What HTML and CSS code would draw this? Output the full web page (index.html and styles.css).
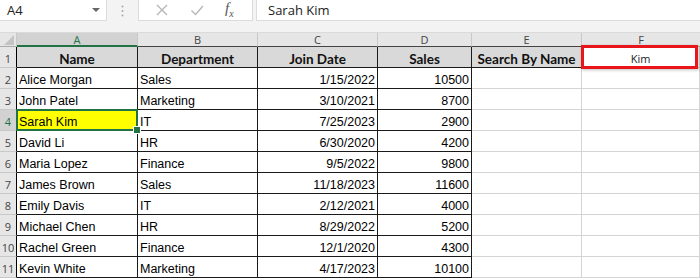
FILE: index.html
```html
<!DOCTYPE html>
<html lang="en">
<head>
    <meta charset="UTF-8">
    <title>Search By Name</title>
    <link rel="stylesheet" href="styles.css">
</head>
<body>
    <div class="barra">
        <div class="nome">
            <span>A4</span>
            <svg width="8" height="5" viewBox="0 0 8 5"><path d="M0 0h8L4 4z" fill="#666"/></svg>
        </div>
        <div class="pontos">
            <svg width="3" height="12" viewBox="0 0 3 12"><circle cx="1.5" cy="1.5" r="1" fill="#aaa"/><circle cx="1.5" cy="6" r="1" fill="#aaa"/><circle cx="1.5" cy="10.5" r="1" fill="#aaa"/></svg>
        </div>
        <div class="botoes">
            <svg width="14" height="14" viewBox="0 0 14 14"><path d="M2 2l10 10M12 2L2 12" stroke="#b5b5b5" stroke-width="1.3" fill="none"/></svg>
            <svg width="14" height="14" viewBox="0 0 14 14"><path d="M1.5 7.5l4 4L13 3" stroke="#b5b5b5" stroke-width="1.3" fill="none"/></svg>
            <span class="fx"><i>f</i><sub>x</sub></span>
        </div>
        <div class="formula">Sarah Kim</div>
    </div>

    <div class="planilha">
        <div class="canto"><svg width="10" height="10" viewBox="0 0 10 10"><path d="M10 0V10H0z" fill="#c4c4c4"/></svg></div>
        <div class="col ativa">A</div>
        <div class="col">B</div>
        <div class="col">C</div>
        <div class="col">D</div>
        <div class="col">E</div>
        <div class="col ultima">F</div>

        <div class="lin">1</div>
        <div class="cel cab">Name</div>
        <div class="cel cab">Department</div>
        <div class="cel cab">Join Date</div>
        <div class="cel cab">Sales</div>
        <div class="cel cab">Search By Name</div>
        <div class="cel busca"><span>Kim</span></div>

        <div class="lin">2</div>
        <div class="cel t">Alice Morgan</div><div class="cel t">Sales</div><div class="cel t num">1/15/2022</div><div class="cel t num">10500</div><div class="cel"></div><div class="cel"></div>

        <div class="lin">3</div>
        <div class="cel t">John Patel</div><div class="cel t">Marketing</div><div class="cel t num">3/10/2021</div><div class="cel t num">8700</div><div class="cel"></div><div class="cel"></div>

        <div class="lin sel">4</div>
        <div class="cel t achado">Sarah Kim</div><div class="cel t">IT</div><div class="cel t num">7/25/2023</div><div class="cel t num">2900</div><div class="cel"></div><div class="cel"></div>

        <div class="lin">5</div>
        <div class="cel t">David Li</div><div class="cel t">HR</div><div class="cel t num">6/30/2020</div><div class="cel t num">4200</div><div class="cel"></div><div class="cel"></div>

        <div class="lin">6</div>
        <div class="cel t">Maria Lopez</div><div class="cel t">Finance</div><div class="cel t num">9/5/2022</div><div class="cel t num">9800</div><div class="cel"></div><div class="cel"></div>

        <div class="lin">7</div>
        <div class="cel t">James Brown</div><div class="cel t">Sales</div><div class="cel t num">11/18/2023</div><div class="cel t num">11600</div><div class="cel"></div><div class="cel"></div>

        <div class="lin">8</div>
        <div class="cel t">Emily Davis</div><div class="cel t">IT</div><div class="cel t num">2/12/2021</div><div class="cel t num">4000</div><div class="cel"></div><div class="cel"></div>

        <div class="lin">9</div>
        <div class="cel t">Michael Chen</div><div class="cel t">HR</div><div class="cel t num">8/29/2022</div><div class="cel t num">5200</div><div class="cel"></div><div class="cel"></div>

        <div class="lin">10</div>
        <div class="cel t">Rachel Green</div><div class="cel t">Finance</div><div class="cel t num">12/1/2020</div><div class="cel t num">4300</div><div class="cel"></div><div class="cel"></div>

        <div class="lin">11</div>
        <div class="cel t">Kevin White</div><div class="cel t">Marketing</div><div class="cel t num">4/17/2023</div><div class="cel t num">10100</div><div class="cel"></div><div class="cel"></div>
    </div>
</body>
</html>
```

FILE: styles.css
```css
:root {
    --cinza: #f3f3f3;
    --grade: #d4d4d4;
    --verde: #217346;
}

* {
    margin: 0px;
    padding: 0px;
    box-sizing: border-box;
}

body {
    width: 700px;
    height: 279px;
    overflow: hidden;
    background-color: #ffffff;
    font-family: "Liberation Sans", Arial, sans-serif;
}

.barra {
    display: flex;
    height: 33px;
    padding-bottom: 11px;
    background-color: var(--cinza);
    border-bottom: 1px solid #dadada;
}

.nome {
    width: 107px;
    background-color: white;
    border-right: 1px solid #dcdcdc;
    border-bottom: 1px solid #dcdcdc;
    display: flex;
    align-items: center;
    justify-content: space-between;
    padding: 0px 6px 0px 7px;
    font-family: "Open Sans", sans-serif;
    font-size: 13px;
    color: #222;
}

.pontos {
    width: 31px;
    display: flex;
    align-items: center;
    justify-content: center;
}

.botoes {
    width: 115px;
    background-color: white;
    border: 1px solid #dcdcdc;
    border-top: none;
    display: flex;
    align-items: center;
    justify-content: space-around;
    padding: 0px 8px 0px 6px;
}

.fx {
    font-family: "Liberation Serif", serif;
    font-size: 15px;
    color: #555;
    line-height: 1;
}

.fx sub {
    font-size: 10px;
    font-style: italic;
}

.formula {
    flex: 1;
    margin-left: 3px;
    background-color: white;
    border-left: 1px solid #dcdcdc;
    border-bottom: 1px solid #dcdcdc;
    display: flex;
    align-items: center;
    padding-left: 11px;
    font-family: "Open Sans", sans-serif;
    font-size: 13px;
    color: #222;
}

.planilha {
    display: grid;
    grid-template-columns: 17px 121px 120px 120px 94px 110px 118px;
    grid-template-rows: 14px repeat(11, 21px);
}

.canto {
    background-color: #e6e6e6;
    border-right: 1px solid #c8c8c8;
    border-bottom: 1px solid #ababab;
    display: flex;
    align-items: flex-end;
    justify-content: flex-end;
    padding: 0px 2px 1px 0px;
}

.col {
    background-color: #e6e6e6;
    border-right: 1px solid #c8c8c8;
    border-bottom: 1px solid #444;
    font-family: "Open Sans", sans-serif;
    font-size: 11px;
    color: #444;
    text-align: center;
    line-height: 13px;
}

.col.ativa {
    background-color: #d2d2d2;
    color: var(--verde);
    border-bottom: 2px solid var(--verde);
}

.col.ultima {
    border-right: none;
    border-bottom-color: #ababab;
}

.lin {
    background-color: #e6e6e6;
    border-right: 1px solid #000;
    border-bottom: 1px solid #c8c8c8;
    font-family: "Open Sans", sans-serif;
    font-size: 11px;
    color: #444;
    display: flex;
    align-items: flex-end;
    justify-content: center;
    padding-bottom: 1px;
}

.lin.sel {
    background-color: #d2d2d2;
    color: var(--verde);
}

.cel {
    border-right: 1px solid var(--grade);
    border-bottom: 1px solid var(--grade);
    font-size: 12.5px;
    color: #000;
    display: flex;
    align-items: center;
    padding: 3px 2px 0px 2px;
    white-space: nowrap;
}

.cel.t {
    border-right-color: #1a1a1a;
    border-bottom-color: #1a1a1a;
}

.cel.num {
    justify-content: flex-end;
}

.cel.cab {
    background-color: #d9d9d9;
    border-right-color: #1a1a1a;
    border-bottom-color: #1a1a1a;
    justify-content: center;
    font-family: Lato, sans-serif;
    font-weight: bold;
    font-size: 13.5px;
    color: #111;
}

.cel.busca {
    position: relative;
    justify-content: center;
    font-family: "Open Sans", sans-serif;
    font-size: 11px;
    color: #222;
}

.cel.busca::after {
    content: "";
    position: absolute;
    left: -1px;
    top: -2px;
    right: 1px;
    bottom: -2px;
    border: 3px solid #e8151b;
    box-shadow: 1px 1px 3px rgba(0, 0, 0, 0.25);
}

.cel.achado {
    position: relative;
    background-color: #ffff00;
}

.cel.achado::before {
    content: "";
    position: absolute;
    left: -1px;
    top: -1px;
    right: -1px;
    bottom: -1px;
    border: 2px solid var(--verde);
}

.cel.achado::after {
    content: "";
    position: absolute;
    right: -4px;
    bottom: -4px;
    width: 6px;
    height: 6px;
    background-color: var(--verde);
    border: 1px solid white;
}
```
